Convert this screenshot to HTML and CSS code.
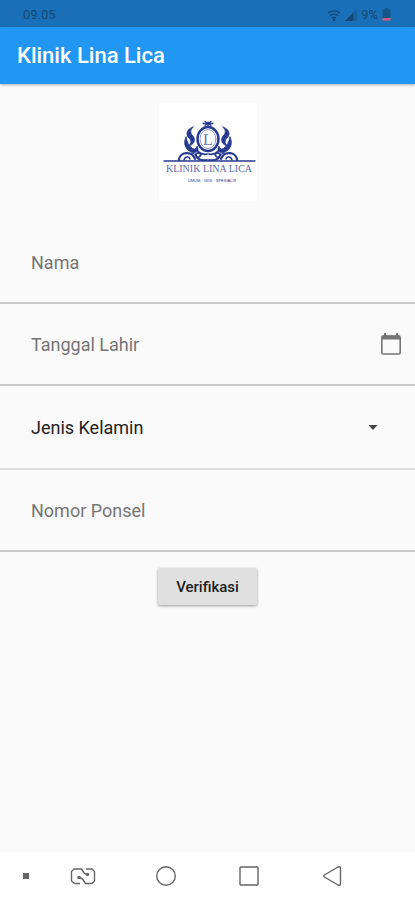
FILE: index.html
```html
<!DOCTYPE html>
<html lang="id">
<head>
    <meta charset="UTF-8">
    <meta name="viewport" content="width=device-width, initial-scale=1.0">
    <title>Klinik Lina Lica</title>
    <link rel="stylesheet" href="styles.css">
</head>
<body>
<div class="status-bar">
    <span>09.05</span>
    <div class="status-icons">
        <svg width="14" height="12" viewBox="0 0 14 12" fill="none" stroke="currentColor" stroke-width="1.3">
            <path d="M1 4.2a9 9 0 0 1 12 0M3 6.8a6 6 0 0 1 8 0M5 9.2a3 3 0 0 1 4 0"/>
            <circle cx="7" cy="10.8" r=".6" fill="currentColor"/>
        </svg>
        <svg width="12" height="12" viewBox="0 0 12 12" fill="currentColor">
            <path d="M12 0v12H0z" opacity=".4"/>
            <path d="M8 4v8H0z"/>
        </svg>
        <span>9%</span>
        <svg width="9" height="13" viewBox="0 0 9 13">
            <path d="M3 0h3v1.500h2.500V10h-8V1.500H3z" fill="currentColor" opacity=".7"/>
            <path d="M.5 10h8v2.500h-8z" fill="#d9577c"/>
        </svg>
    </div>
</div>
<header class="app-bar">
    <h1>Klinik Lina Lica</h1>
</header>
<main>
    <svg class="logo" viewBox="0 0 98 98" role="img" aria-label="Klinik Lina Lica">
        <rect width="98" height="98" fill="#fff"/>
        <g fill="none" stroke="#273a91" stroke-linecap="round">
            <ellipse cx="49" cy="36" rx="10.500" ry="12" stroke-width="2.400"/>
            <ellipse cx="49" cy="36" rx="8" ry="9.500" stroke-width=".5"/>
            <path d="M5 58h91" stroke-width="1.300"/>
            <path d="M49 23v-4M44 20.500h10M46 18.500l6 4M52 18.500l-6 4" stroke-width="1.300"/>
            <g id="scroll">
                <path d="M34 24c-6 2-8 7-4 11 3 3 2 6-1 8 6-1 8-6 5-10-3-3-3-6 0-9z" fill="#273a91" stroke-width=".8"/>
                <path d="M27 34c-3 6-1 12 5 15 5 2 9-2 6-6 0 3-3 4-5 2-3-2-5-6-6-11z" fill="#273a91" stroke-width=".8"/>
                <path d="M20 57c0-8 13-10 16-1" stroke-width="2.200"/>
                <path d="M25 57c1-4 5-4 6-1" stroke-width="1.500"/>
                <path d="M48 57c-7 1-12-2-11-6 3-3 7 1 3 3M37 46c3 4 7 6 11 5" stroke-width="1.800"/>
                <path d="M33 50c4 1 6 4 7 7" stroke-width="1.200"/>
            </g>
            <use href="#scroll" transform="matrix(-1 0 0 1 98 0)"/>
        </g>
        <text class="logo-letter" x="49" y="42" text-anchor="middle">L</text>
        <text class="logo-name" x="50" y="69" text-anchor="middle">KLINIK LINA LICA</text>
        <text class="logo-tag" x="53" y="79" text-anchor="middle">UMUM · GIGI · SPESIALIS</text>
    </svg>
    <form class="form">
        <div class="field">
            <input type="text" id="nama" placeholder="Nama" aria-label="Nama">
        </div>
        <div class="field">
            <input type="text" id="lahir" placeholder="Tanggal Lahir" aria-label="Tanggal Lahir">
            <button type="button" class="icon-button" aria-label="Pilih tanggal">
                <svg width="24" height="24" viewBox="0 0 24 24" fill="none" stroke="#757575">
                    <rect x="2.800" y="4" width="18.400" height="18" rx="1.500" stroke-width="1.600"/>
                    <path d="M3 5.500h18" stroke-width="4"/>
                    <path d="M6 1v3M18 1v3" stroke-width="2"/>
                </svg>
            </button>
        </div>
        <div class="field field-select">
            <select id="kelamin" aria-label="Jenis Kelamin">
                <option>Jenis Kelamin</option>
                <option>Laki-laki</option>
                <option>Perempuan</option>
            </select>
            <svg class="arrow" width="24" height="24" viewBox="0 0 24 24" fill="#444">
                <path d="M7.500 10l4.500 5 4.500-5z"/>
            </svg>
        </div>
        <div class="field">
            <input type="tel" id="ponsel" placeholder="Nomor Ponsel" aria-label="Nomor Ponsel">
        </div>
        <button type="submit" class="submit">Verifikasi</button>
    </form>
</main>
<nav class="nav-bar">
    <button type="button" aria-label="Sembunyikan">
        <svg width="24" height="24" viewBox="0 0 24 24"><rect x="9" y="9" width="6" height="6" fill="#666"/></svg>
    </button>
    <button type="button" aria-label="Layar terpisah">
        <svg width="26" height="24" viewBox="0 0 26 24" fill="none" stroke="#666" stroke-width="1.400" stroke-linejoin="round">
            <path d="M10 19.500H4.500L1.500 17V7.500L4 5h7.500l3 4.500 3 1"/>
            <path d="M16 5h6l2.500 2.500V17L22 19.500h-6.500l-3-4.500-3-1.500"/>
            <circle cx="9" cy="13.500" r="1.800" fill="#666" stroke="none"/>
            <circle cx="17.500" cy="10.500" r="1.800" fill="#666" stroke="none"/>
        </svg>
    </button>
    <button type="button" aria-label="Beranda">
        <svg width="24" height="24" viewBox="0 0 24 24" fill="none" stroke="#666" stroke-width="1.400"><circle cx="12" cy="12" r="9.300"/></svg>
    </button>
    <button type="button" aria-label="Aplikasi terbaru">
        <svg width="24" height="24" viewBox="0 0 24 24" fill="none" stroke="#666" stroke-width="1.400"><rect x="3" y="3" width="18" height="18" rx="1"/></svg>
    </button>
    <button type="button" aria-label="Kembali">
        <svg width="24" height="24" viewBox="0 0 24 24" fill="none" stroke="#666" stroke-width="1.400" stroke-linejoin="round"><path d="M4.500 11 18 3q2.500-1 2.500 1.500v15q0 2.500-2.500 1.500L4.500 13q-1.500-1 0-2z"/></svg>
    </button>
</nav>
</body>
</html>
```

FILE: styles.css
```css
* {
    box-sizing: border-box;
}
body {
    margin: 0;
    min-height: 100vh;
    display: flex;
    flex-direction: column;
    background-color: #fafafa;
    font-family: Roboto, "Liberation Sans", sans-serif;
    color: #212121;
}
button, input, select {
    font-family: inherit;
    color: inherit;
}
.status-bar {
    display: flex;
    justify-content: space-between;
    align-items: center;
    height: 27px;
    padding: 2px 24px 0 23px;
    background-color: #1a70b8;
    color: #124875;
    font-size: 13px;
}
.status-icons {
    display: flex;
    align-items: center;
    gap: 4px;
}
.app-bar {
    display: flex;
    align-items: center;
    height: 57px;
    padding: 0 17px;
    background-color: #2196f3;
    color: #fff;
    box-shadow: 0 1px 3px rgba(0, 0, 0, 0.3);
}
h1 {
    margin: 0;
    font-size: 22px;
    font-weight: 500;
}
main {
    flex: 1;
    display: flex;
    flex-direction: column;
    align-items: center;
    padding-top: 19px;
}
.logo {
    width: 98px;
    height: 98px;
}
.logo text {
    font-family: "Liberation Serif", serif;
    fill: #273a91;
}
.logo .logo-letter {
    font-size: 16px;
    fill: #6d78b5;
}
.logo .logo-name {
    font-size: 10px;
    fill: #5f6bad;
}
.logo .logo-tag {
    font-family: "Liberation Sans", sans-serif;
    font-size: 4px;
}
.form {
    display: flex;
    flex-direction: column;
    align-items: center;
    width: 100%;
    padding-top: 21px;
}
.field {
    display: flex;
    align-items: center;
    width: 100%;
    height: 82px;
    border-bottom: 2px solid #c8c8c8;
}
.field input,
.field select {
    flex: 1;
    min-width: 0;
    height: 100%;
    padding: 0 31px;
    border: none;
    outline: none;
    background: none;
    font-size: 18px;
}
.field input::placeholder {
    color: #757575;
    opacity: 1;
}
.icon-button {
    display: flex;
    padding: 12px;
    border: none;
    background: none;
}
.field-select {
    display: grid;
    height: 84px;
    border-color: #dcdcdc;
}
.field-select select,
.arrow {
    grid-area: 1 / 1;
}
.field select {
    appearance: none;
}
.arrow {
    justify-self: end;
    margin-right: 30px;
    pointer-events: none;
}
.submit {
    height: 37px;
    margin-top: 16px;
    padding: 0 18px;
    border: none;
    border-radius: 2px;
    background-color: #e0e0e0;
    box-shadow: 0 1px 3px rgba(0, 0, 0, 0.4);
    font-size: 15px;
    font-weight: 500;
}
.nav-bar {
    display: grid;
    grid-template-columns: 1fr 2fr 2fr 2fr 2fr 1fr;
    height: 48px;
    background-color: #fff;
}
.nav-bar button {
    display: flex;
    align-items: center;
    justify-content: center;
    padding: 0;
    border: none;
    background: none;
}
.nav-bar button:first-child {
    justify-content: flex-end;
    padding-right: 4px;
}
```
